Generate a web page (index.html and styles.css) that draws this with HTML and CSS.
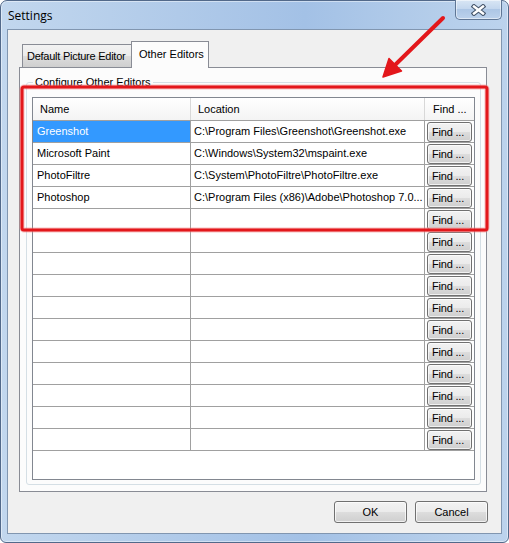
FILE: index.html
```html
<!DOCTYPE html>
<html>
<head>
<meta charset="utf-8">
<link rel="stylesheet" href="styles.css">
</head>
<body>
<div class="window">
  <div class="titlebar">
    <span class="title">Settings</span>
    <div class="close">
      <svg width="15" height="12" viewBox="0 0 15 12">
        <path d="M3 2.5 L12 9.5 M12 2.5 L3 9.5" stroke="#45556b" stroke-width="4.6" stroke-linecap="square" fill="none"/>
        <path d="M3 2.5 L12 9.5 M12 2.5 L3 9.5" stroke="#ffffff" stroke-width="2.4" stroke-linecap="square" fill="none"/>
      </svg>
    </div>
  </div>
  <div class="client">
    <div class="tabs">
      <div class="tab">Default Picture Editor</div>
      <div class="tab active">Other Editors</div>
    </div>
    <div class="panel">
      <div class="group">
        <div class="legend">Configure Other Editors</div>
        <div class="grid">
          <div class="row header">
            <div class="cell name">Name</div>
            <div class="cell loc">Location</div>
            <div class="cell find">Find ...</div>
          </div>
          <div class="row">
            <div class="cell name selected">Greenshot</div>
            <div class="cell loc">C:\Program Files\Greenshot\Greenshot.exe</div>
            <div class="cell find"><span class="fbtn">Find ...</span></div>
          </div>
          <div class="row">
            <div class="cell name">Microsoft Paint</div>
            <div class="cell loc">C:\Windows\System32\mspaint.exe</div>
            <div class="cell find"><span class="fbtn">Find ...</span></div>
          </div>
          <div class="row">
            <div class="cell name">PhotoFiltre</div>
            <div class="cell loc">C:\System\PhotoFiltre\PhotoFiltre.exe</div>
            <div class="cell find"><span class="fbtn">Find ...</span></div>
          </div>
          <div class="row">
            <div class="cell name">Photoshop</div>
            <div class="cell loc">C:\Program Files (x86)\Adobe\Photoshop 7.0...</div>
            <div class="cell find"><span class="fbtn">Find ...</span></div>
          </div>
          <div class="row"><div class="cell name"></div><div class="cell loc"></div><div class="cell find"><span class="fbtn">Find ...</span></div></div>
          <div class="row"><div class="cell name"></div><div class="cell loc"></div><div class="cell find"><span class="fbtn">Find ...</span></div></div>
          <div class="row"><div class="cell name"></div><div class="cell loc"></div><div class="cell find"><span class="fbtn">Find ...</span></div></div>
          <div class="row"><div class="cell name"></div><div class="cell loc"></div><div class="cell find"><span class="fbtn">Find ...</span></div></div>
          <div class="row"><div class="cell name"></div><div class="cell loc"></div><div class="cell find"><span class="fbtn">Find ...</span></div></div>
          <div class="row"><div class="cell name"></div><div class="cell loc"></div><div class="cell find"><span class="fbtn">Find ...</span></div></div>
          <div class="row"><div class="cell name"></div><div class="cell loc"></div><div class="cell find"><span class="fbtn">Find ...</span></div></div>
          <div class="row"><div class="cell name"></div><div class="cell loc"></div><div class="cell find"><span class="fbtn">Find ...</span></div></div>
          <div class="row"><div class="cell name"></div><div class="cell loc"></div><div class="cell find"><span class="fbtn">Find ...</span></div></div>
          <div class="row"><div class="cell name"></div><div class="cell loc"></div><div class="cell find"><span class="fbtn">Find ...</span></div></div>
          <div class="row"><div class="cell name"></div><div class="cell loc"></div><div class="cell find"><span class="fbtn">Find ...</span></div></div>
        </div>
      </div>
    </div>
    <div class="buttons">
      <div class="btn">OK</div>
      <div class="btn">Cancel</div>
    </div>
  </div>
  <svg class="annot" width="509" height="543" viewBox="0 0 509 543">
    <rect x="22" y="87" width="465" height="143" rx="2" fill="none" stroke="#f08080" stroke-opacity="0.5" stroke-width="5"/>
    <rect x="22" y="87" width="465" height="143" rx="2" fill="none" stroke="#e3171b" stroke-width="3"/>
    <line x1="443" y1="18" x2="395" y2="65" stroke="#e3171b" stroke-width="4" stroke-linecap="round"/>
    <polygon points="383,77 389,58.5 401.5,71" fill="#e3171b" stroke="#e3171b" stroke-width="1.5" stroke-linejoin="round"/>
  </svg>
</div>
</body>
</html>
```

FILE: styles.css
```css
html, body {
  margin: 0;
  padding: 0;
}
body {
  width: 509px;
  height: 543px;
  overflow: hidden;
  font-family: "Liberation Sans", Arial, sans-serif;
  font-size: 11px;
  color: #000;
}
.window {
  position: relative;
  box-sizing: border-box;
  width: 509px;
  height: 543px;
  border: 1px solid #52698a;
  border-radius: 7px 7px 6px 6px;
  background: linear-gradient(to right, #c2d7ee 0%, #b0cae9 35%, #a3c1e6 60%, #b4cdea 85%, #bcd3ed 100%);
  box-shadow: inset 0 0 0 1px rgba(255,255,255,0.45);
  padding: 0 6px 8px 6px;
  display: flex;
  flex-direction: column;
}
.titlebar {
  height: 28px;
  display: flex;
  align-items: flex-start;
  flex: none;
}
.title {
  font-family: "Open Sans", "Noto Sans", sans-serif;
  font-size: 12px;
  line-height: 16px;
  margin: 7px 0 0 1px;
  color: #000;
}
.close {
  margin-left: auto;
  margin-top: -1px;
  width: 47px;
  height: 20px;
  box-sizing: border-box;
  border: 1px solid #5f7695;
  border-top: none;
  border-radius: 0 0 5px 5px;
  background: linear-gradient(#d9e6f4 0%, #c4d7ee 45%, #adc6e5 50%, #bcd2ec 100%);
  box-shadow: inset 0 0 0 1px rgba(255,255,255,0.5);
  display: flex;
  align-items: center;
  justify-content: center;
}
.close svg {
  display: block;
  margin-top: 1px;
}
.client {
  flex: 1;
  box-sizing: border-box;
  border: 1px solid #8196b0;
  background: #f0f0f0;
  padding: 11px 0 0 11px;
  display: flex;
  flex-direction: column;
}
.tabs {
  height: 26px;
  display: flex;
  align-items: flex-end;
  padding-left: 3px;
  flex: none;
  position: relative;
  z-index: 2;
}
.tab {
  box-sizing: border-box;
  height: 23px;
  border: 1px solid #898c95;
  border-bottom: none;
  border-right: none;
  width: 109px;
  padding-left: 4px;
  line-height: 23px;
  letter-spacing: -0.25px;
  background: linear-gradient(#f2f2f2 0%, #ebebeb 50%, #dddddd 50%, #cfcfcf 100%);
  white-space: nowrap;
  overflow: hidden;
}
.tab.active {
  width: 78px;
  height: 27px;
  margin-bottom: -1px;
  border-right: 1px solid #898c95;
  padding-left: 7px;
  line-height: 24px;
  letter-spacing: 0;
  background: #fcfcfc;
}
.panel {
  box-sizing: border-box;
  height: 425px;
  margin-right: 14px;
  border: 1px solid #898c95;
  background: #fcfcfc;
  display: flex;
  flex-direction: column;
  flex: none;
}
.group {
  flex: 1;
  margin: 14px 5px 6px 6px;
  border: 1px solid #d5dfe5;
  border-radius: 3px;
  padding: 14px 5px 4px 5px;
  display: flex;
  flex-direction: column;
}
.legend {
  align-self: flex-start;
  height: 13px;
  line-height: 13px;
  margin: -21px 0 8px 1px;
  padding: 0 2px;
  background: #fcfcfc;
  color: #000;
}
.grid {
  flex: 1;
  border: 1px solid #828790;
  background: #ffffff;
}
.row {
  box-sizing: border-box;
  display: grid;
  grid-template-columns: 158px 234px 49px;
  height: 22px;
  border-bottom: 1px solid #a0a0a0;
}
.row.header {
  height: 23px;
  border-bottom: 1px solid #a0a0a0;
  background: linear-gradient(#ffffff, #f4f4f4);
}
.cell {
  box-sizing: border-box;
  line-height: 21px;
  white-space: nowrap;
  overflow: hidden;
}
.cell.name, .cell.loc {
  border-right: 1px solid #a0a0a0;
}
.header .cell {
  padding-left: 7px;
  line-height: 22px;
}
.header .cell.name, .header .cell.loc {
  border-right: 1px solid #d8d8d8;
}
.header .cell.find {
  padding-left: 8px;
}
.row .cell.name {
  padding-left: 4px;
}
.row .cell.loc {
  padding-left: 3px;
}
.header .cell.name, .header .cell.loc {
  padding-left: 7px;
}
.cell.selected {
  background: #3399ff;
  color: #ffffff;
}
.cell.find {
  padding-left: 2px;
}
.fbtn {
  display: block;
  box-sizing: border-box;
  width: 45px;
  height: 20px;
  margin-top: 1px;
  border: 1px solid #707070;
  border-radius: 3px;
  background: linear-gradient(#f2f2f2 0%, #ebebeb 50%, #dddddd 50%, #cfcfcf 100%);
  box-shadow: inset 0 0 0 1px rgba(255,255,255,0.7);
  line-height: 18px;
  padding-left: 4px;
  letter-spacing: -0.2px;
  color: #000;
}
.buttons {
  display: flex;
  justify-content: flex-end;
  gap: 8px;
  margin-top: 9px;
  padding-right: 13px;
  flex: none;
}
.btn {
  box-sizing: border-box;
  width: 73px;
  height: 22px;
  border: 1px solid #707070;
  border-radius: 3px;
  background: linear-gradient(#f2f2f2 0%, #ebebeb 50%, #dddddd 50%, #cfcfcf 100%);
  box-shadow: inset 0 0 0 1px rgba(255,255,255,0.7);
  text-align: center;
  line-height: 20px;
}
.annot {
  position: absolute;
  left: -1px;
  top: -1px;
  pointer-events: none;
}
```
